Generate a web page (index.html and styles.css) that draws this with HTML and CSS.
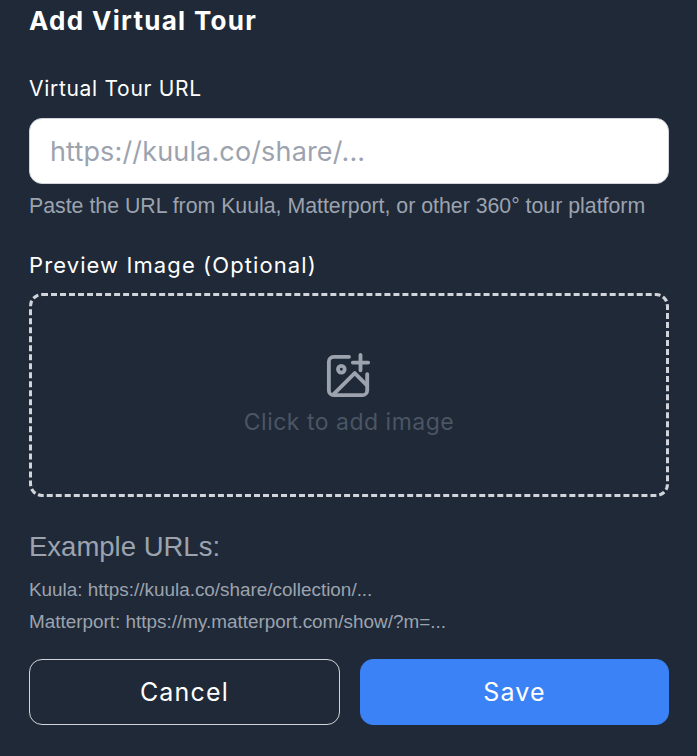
FILE: index.html
```html
<!DOCTYPE html>
<html lang="en">
<head>
  <meta charset="UTF-8">
  <title>Add Virtual Tour</title>
  <link rel="stylesheet" href="styles.css">
</head>
<body>
  <div class="modal">
    <h1 class="title">Add Virtual Tour</h1>

    <label class="label url-label" for="tourUrl">Virtual Tour URL</label>
    <input class="url-input" id="tourUrl" type="text" placeholder="https://kuula.co/share/...">
    <p class="hint">Paste the URL from Kuula, Matterport, or other 360° tour platform</p>

    <div class="label preview-label">Preview Image (Optional)</div>
    <div class="dropzone">
      <svg class="add-icon" viewBox="0 0 48 48" fill="none" stroke="currentColor" stroke-width="4" stroke-linecap="round" stroke-linejoin="round">
        <path d="M24 4H8a5 5 0 0 0-5 5v30a5 5 0 0 0 5 5h30a5 5 0 0 0 5-5V22"/>
        <path d="M36 2v16M28 10h16"/>
        <circle cx="16" cy="17" r="3.5"/>
        <path d="M8 43l22-22 13 13"/>
      </svg>
      <span class="dropzone-text">Click to add image</span>
    </div>

    <div class="examples">
      <h2 class="examples-title">Example URLs:</h2>
      <p class="example">Kuula: https://kuula.co/share/collection/...</p>
      <p class="example">Matterport: https://my.matterport.com/show/?m=...</p>
    </div>

    <div class="actions">
      <button class="btn btn-cancel">Cancel</button>
      <button class="btn btn-save">Save</button>
    </div>
  </div>
</body>
</html>
```

FILE: styles.css
```css
html, body {
  margin: 0;
  height: 100%;
}
body {
  background: #1f2937;
  overflow: hidden;
  font-family: "Inter", "Liberation Sans", sans-serif;
}
.modal {
  padding: 0 28px 0 29px;
}
.title {
  margin: 0;
  padding-top: 3px;
  font-size: 26px;
  line-height: 36px;
  font-weight: 700;
  letter-spacing: 1.3px;
  color: #fff;
}
.label {
  display: block;
  font-size: 21px;
  line-height: 30px;
  letter-spacing: 0.7px;
  color: #fff;
}
.url-label {
  margin-top: 35px;
  margin-bottom: 14px;
}
.preview-label {
  margin-top: 30px;
  margin-bottom: 13px;
  font-size: 22px;
  letter-spacing: 1.1px;
}
.url-input {
  display: block;
  box-sizing: border-box;
  width: 100%;
  height: 66px;
  padding: 0 20px;
  border: 1px solid #d1d5db;
  border-radius: 13px;
  background: #fff;
  font-family: inherit;
  font-size: 27px;
  letter-spacing: 0.15px;
  outline: none;
}
.url-input::placeholder {
  color: #9ca3af;
}
.hint {
  margin: 8px 0 0;
  font-family: "Liberation Sans", sans-serif;
  font-size: 21.3px;
  line-height: 28px;
  color: #9ca3af;
}
.dropzone {
  box-sizing: border-box;
  height: 204px;
  border: 3px dashed #d1d5db;
  border-radius: 13px;
  display: flex;
  flex-direction: column;
  align-items: center;
  justify-content: center;
  gap: 8px;
}
.add-icon {
  width: 46px;
  height: 46px;
  color: #9ca3af;
}
.dropzone-text {
  font-size: 23px;
  line-height: 30px;
  letter-spacing: 0.5px;
  color: #4b5563;
}
.examples {
  margin-top: 31px;
  font-family: "Liberation Sans", sans-serif;
  color: #9ca3af;
}
.examples-title {
  margin: 0 0 8px;
  font-size: 27.5px;
  line-height: 38px;
  font-weight: 400;
}
.example {
  margin: 0;
  font-size: 18.9px;
  line-height: 32px;
}
.actions {
  display: grid;
  grid-template-columns: 311px 309px;
  gap: 20px;
  margin-top: 21px;
}
.btn {
  height: 66px;
  border-radius: 13px;
  border: 1px solid #d1d5db;
  background: transparent;
  color: #fff;
  font-family: inherit;
  font-size: 25px;
  letter-spacing: 1.2px;
}
.btn-save {
  background: #3b82f6;
  border-color: #3b82f6;
}
```
